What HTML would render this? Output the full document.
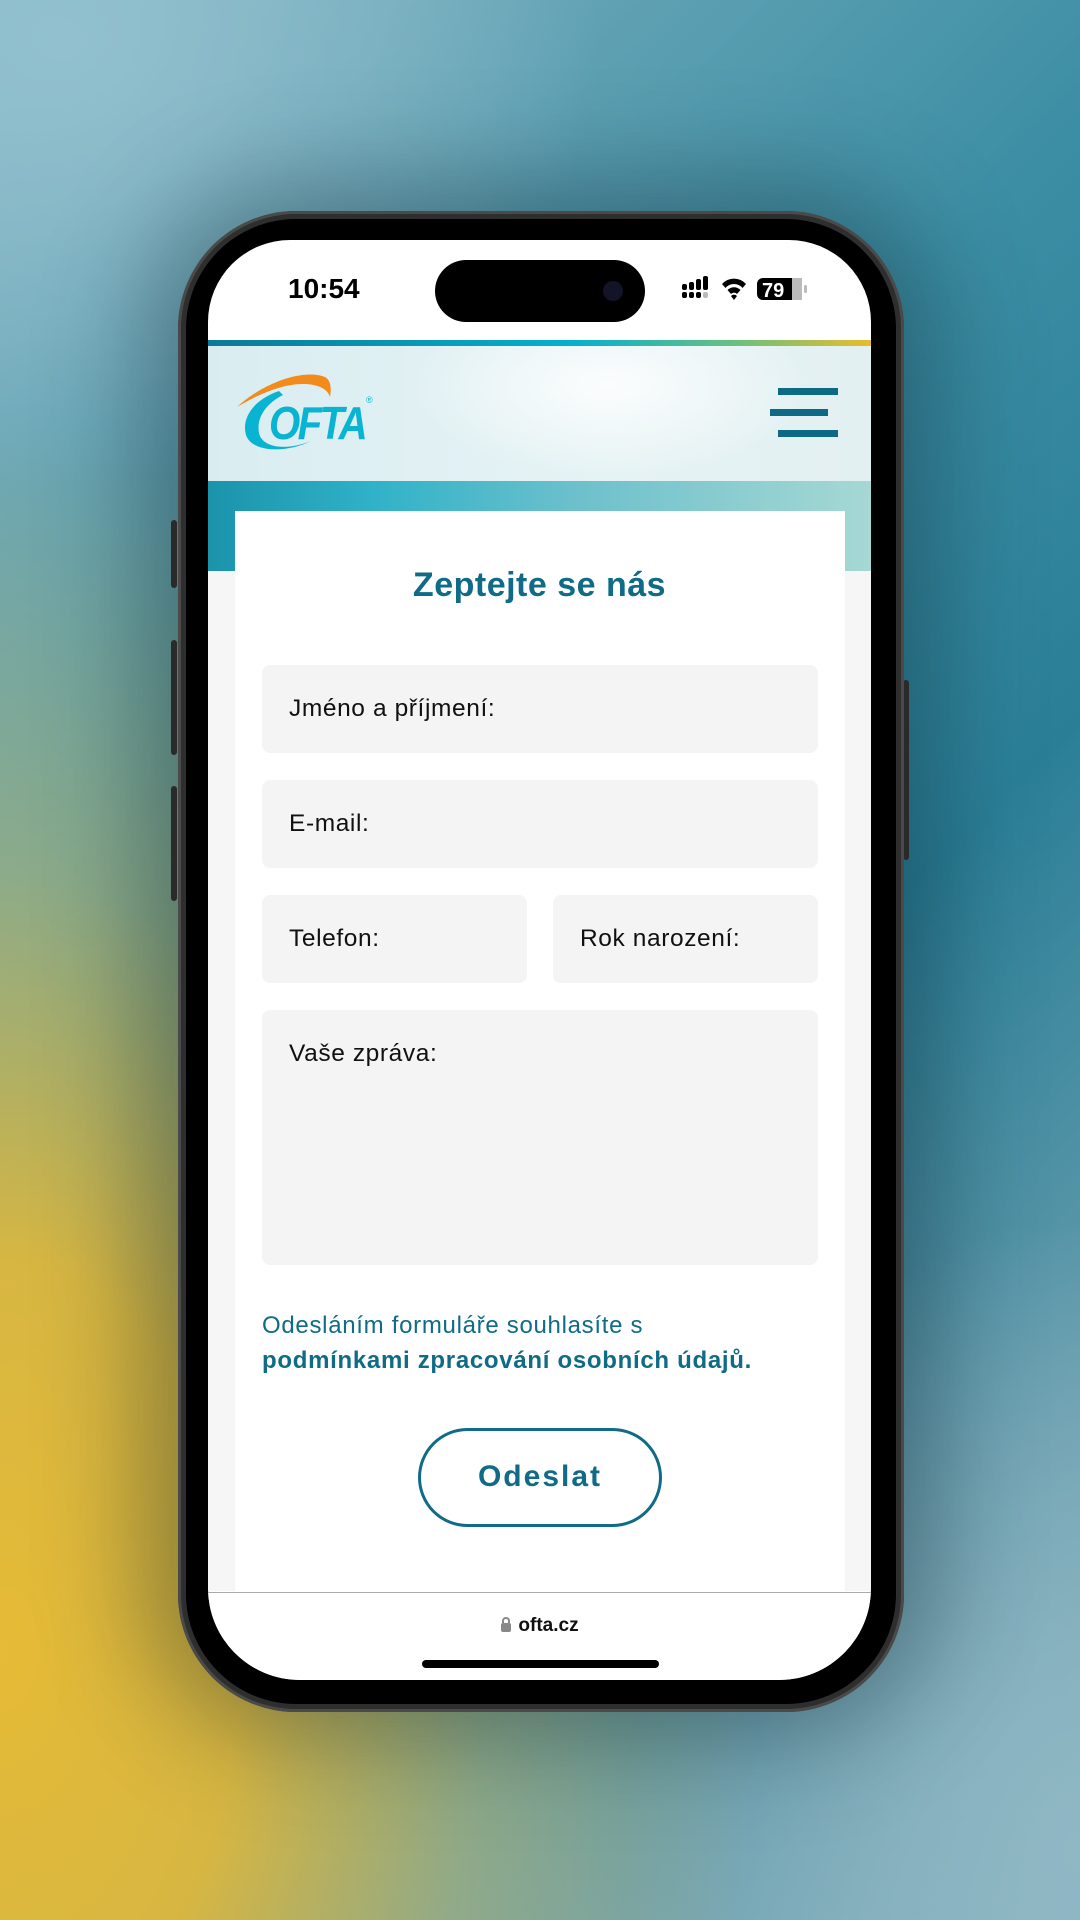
<!DOCTYPE html>
<html><head><meta charset="utf-8"><style>
*{margin:0;padding:0;box-sizing:border-box}
html,body{width:1080px;height:1920px;overflow:hidden}
body{position:relative;font-family:"Liberation Sans",sans-serif;
background:
radial-gradient(ellipse 800px 1300px at 0px 1650px,#e6bb36 0%,rgba(228,186,58,.92) 30%,rgba(190,186,110,.55) 60%,rgba(160,180,150,0) 95%),
radial-gradient(ellipse 600px 500px at 60px 40px,#92c0ce 0%,rgba(146,192,206,0) 90%),
radial-gradient(ellipse 500px 700px at 1080px 1850px,#8fb7c4 0%,rgba(143,183,196,0) 90%),
linear-gradient(135deg,#86b6c4 0%,#3c8ea4 40%,#2a7f97 60%,#6b9faf 85%,#8ab3bf 100%);}
.shadow{position:absolute;left:140px;top:180px;width:800px;height:1560px;border-radius:160px;background:rgba(10,30,40,.35);filter:blur(50px)}
.phone{position:absolute;left:178px;top:211px;width:726px;height:1501px;border-radius:118px;background:#2e2e2e;box-shadow:0 0 0 3px #4a4a4a inset}
.bezel{position:absolute;left:8px;top:8px;right:8px;bottom:8px;border-radius:110px;background:#000}
.screen{position:absolute;left:208px;top:240px;width:663px;height:1440px;border-radius:82px 82px 92px 92px;background:#fff;overflow:hidden}
.btn{position:absolute;background:#2a2a2a;width:6px;border-radius:3px}
.time{position:absolute;left:80px;top:33px;font-size:28px;font-weight:bold;color:#000}
.island{position:absolute;left:227px;top:20px;width:210px;height:62px;border-radius:31px;background:#000}
.cam{position:absolute;right:22px;top:21px;width:20px;height:20px;border-radius:50%;background:#141428}
.topline{position:absolute;left:0;top:100px;width:663px;height:6px;background:linear-gradient(90deg,#0d7a95,#05b0d0 55%,#6cc07e 80%,#e8bd2c)}
.header{position:absolute;left:0;top:106px;width:663px;height:135px;background:radial-gradient(ellipse 200px 90px at 400px 40px,#fbfdfd,rgba(255,255,255,0) 100%),linear-gradient(90deg,#d9edf1,#e6f3f5 60%,#e3f0f2)}
.band{position:absolute;left:0;top:241px;width:663px;height:90px;background:linear-gradient(90deg,#1a93ab,#30b2c8 25%,#6cc0cc 55%,#a6d8d4)}
.grey{position:absolute;left:0;top:331px;width:663px;height:1020px;background:#f6f6f6}
.card{position:absolute;left:27px;top:271px;width:610px;height:1080px;background:#fff}
.title{position:absolute;left:0;width:663px;top:326px;text-align:center;font-size:34px;font-weight:bold;color:#0f6b86;letter-spacing:.5px}
.f{position:absolute;background:#f4f4f4;border-radius:8px;font-size:24.5px;letter-spacing:.6px;color:#111;padding-left:27px;line-height:88px}
.consent{position:absolute;left:54px;top:1068px;font-size:24px;color:#0f6b86;line-height:35px;letter-spacing:.7px}
.send{position:absolute;left:210px;top:1188px;width:244px;height:99px;border:3.5px solid #0f6b86;border-radius:50px;text-align:center;line-height:92px;font-size:30px;font-weight:bold;color:#0f6b86;letter-spacing:2px}
.bottom{position:absolute;left:0;top:1352px;width:663px;height:90px;border-top:1.5px solid #aaa;background:#fff}
.url{position:absolute;left:0;width:663px;top:22px;text-align:center;font-size:19px;color:#111;font-weight:bold}
.home{position:absolute;left:214px;top:67px;width:237px;height:8px;border-radius:4px;background:#000}
.hb{position:absolute;height:7px;background:#0d6a85}
</style></head><body>
<div class="shadow"></div>
<div class="btn" style="left:171px;top:520px;height:68px"></div>
<div class="btn" style="left:171px;top:640px;height:115px"></div>
<div class="btn" style="left:171px;top:786px;height:115px"></div>
<div class="btn" style="left:903px;top:680px;height:180px"></div>
<div class="phone"><div class="bezel"></div></div>
<div class="screen">
 <div class="time">10:54</div>
 <div class="island"><div class="cam"></div></div>
 <svg style="position:absolute;left:474px;top:36px" width="150" height="26" viewBox="0 0 150 26">
  <g fill="#000"><rect x="0" y="8" width="5" height="6" rx="2"/><rect x="7" y="6" width="5" height="8" rx="2"/><rect x="14" y="3" width="5" height="11" rx="2"/><rect x="21" y="0" width="5" height="14" rx="2"/>
  <rect x="0" y="16" width="5" height="6" rx="2"/><rect x="7" y="16" width="5" height="6" rx="2"/><rect x="14" y="16" width="5" height="6" rx="2"/><rect x="21" y="16" width="5" height="6" rx="2" fill="#bbb"/>
  <path d="M40 8 A16 16 0 0 1 64 8 L60.5 12 A11 11 0 0 0 43.5 12Z"/><path d="M45.5 14 A9 9 0 0 1 58.5 14 L55 18 A4 4 0 0 0 49 18Z"/><path d="M52 24 L49 20 A4 4 0 0 1 55 20Z"/>
  <rect x="75" y="2" width="45" height="22" rx="6"/><rect x="110" y="2" width="10" height="22" fill="#bbb"/><rect x="122" y="9" width="3" height="8" rx="1.5" fill="#bbb"/></g>
  <text x="80" y="21" font-family="Liberation Sans" font-weight="bold" font-size="20" fill="#fff">79</text>
 </svg>
 <div class="topline"></div>
 <div class="header">
  <svg style="position:absolute;left:27px;top:25px" width="170" height="90" viewBox="0 0 170 90">
   <path d="M2 36 C30 10 70 -2 90 6 C97 10 96 20 95 26 C92 14 70 8 40 18 C25 23 12 30 2 36Z" fill="#f28a1c"/>
   <path d="M44 20 C20 28 6 46 11 64 C17 82 52 82 76 70 C52 80 27 77 24 62 C21 46 32 32 48 24Z" fill="#09b4d2"/>
   <text x="34" y="68" font-family="Liberation Sans" font-weight="bold" font-style="italic" font-size="46" fill="#09b4d2" letter-spacing="-3" textLength="96" lengthAdjust="spacingAndGlyphs">OFTA</text>
   <text x="131" y="32" font-family="Liberation Sans" font-size="9" fill="#09b4d2">®</text>
  </svg>
  <div class="hb" style="left:570px;top:42px;width:60px"></div>
  <div class="hb" style="left:562px;top:63px;width:58px"></div>
  <div class="hb" style="left:570px;top:84px;width:60px"></div>
 </div>
 <div class="band"></div>
 <div class="grey"></div>
 <div class="card"></div>
 <div class="title">Zeptejte se nás</div>
 <div class="f" style="left:54px;top:425px;width:556px;height:88px">Jméno a příjmení:</div>
 <div class="f" style="left:54px;top:540px;width:556px;height:88px">E-mail:</div>
 <div class="f" style="left:54px;top:655px;width:265px;height:88px">Telefon:</div>
 <div class="f" style="left:345px;top:655px;width:265px;height:88px">Rok narození:</div>
 <div class="f" style="left:54px;top:770px;width:556px;height:255px;line-height:30px;padding-top:29px">Vaše zpráva:</div>
 <div class="consent">Odesláním formuláře souhlasíte s<br><b>podmínkami zpracování osobních údajů.</b></div>
 <div class="send">Odeslat</div>
 <div class="bottom">
  <div class="url"><svg width="12" height="16" viewBox="0 0 12 16" style="vertical-align:-1px;margin-right:6px"><path d="M3 7V5a3 3 0 0 1 6 0v2" stroke="#888" stroke-width="2" fill="none"/><rect x="1" y="7" width="10" height="9" rx="2" fill="#888"/></svg>ofta.cz</div>
  <div class="home"></div>
 </div>
</div>
</body></html>
